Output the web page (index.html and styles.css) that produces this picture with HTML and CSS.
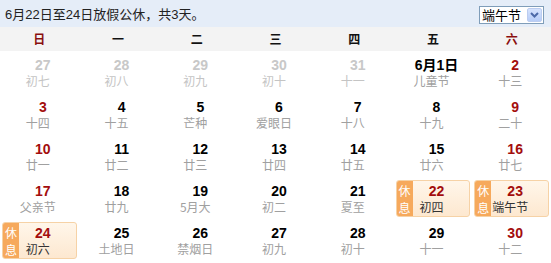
FILE: index.html
```html
<!DOCTYPE html>
<html lang="zh-CN">
<head>
<meta charset="utf-8">
<title>日历</title>
<link rel="stylesheet" href="styles.css">
</head>
<body>
<div class="cal">
  <div class="top">
    <span class="info">6月22日至24日放假公休，共3天。</span>
    <div class="sel">
      <span class="sel-text">端午节</span>
      <span class="sel-btn"><svg width="9" height="6" viewBox="0 0 9 6"><path d="M1 1 L4.5 4.5 L8 1" fill="none" stroke="#4d6aa8" stroke-width="2"/></svg></span>
    </div>
  </div>
  <div class="week">
    <div class="wd red">日</div>
    <div class="wd">一</div>
    <div class="wd">二</div>
    <div class="wd">三</div>
    <div class="wd">四</div>
    <div class="wd">五</div>
    <div class="wd red">六</div>
  </div>
  <div class="days">
    <div class="cell other"><b class="num">27</b><span class="lun">初七</span></div>
    <div class="cell other"><b class="num">28</b><span class="lun">初八</span></div>
    <div class="cell other"><b class="num">29</b><span class="lun">初九</span></div>
    <div class="cell other"><b class="num">30</b><span class="lun">初十</span></div>
    <div class="cell other"><b class="num">31</b><span class="lun">十一</span></div>
    <div class="cell"><b class="num">6月1日</b><span class="lun">儿童节</span></div>
    <div class="cell wk"><b class="num">2</b><span class="lun">十三</span></div>

    <div class="cell wk"><b class="num">3</b><span class="lun">十四</span></div>
    <div class="cell"><b class="num">4</b><span class="lun">十五</span></div>
    <div class="cell"><b class="num">5</b><span class="lun">芒种</span></div>
    <div class="cell"><b class="num">6</b><span class="lun">爱眼日</span></div>
    <div class="cell"><b class="num">7</b><span class="lun">十八</span></div>
    <div class="cell"><b class="num">8</b><span class="lun">十九</span></div>
    <div class="cell wk"><b class="num">9</b><span class="lun">二十</span></div>

    <div class="cell wk"><b class="num">10</b><span class="lun">廿一</span></div>
    <div class="cell"><b class="num">11</b><span class="lun">廿二</span></div>
    <div class="cell"><b class="num">12</b><span class="lun">廿三</span></div>
    <div class="cell"><b class="num">13</b><span class="lun">廿四</span></div>
    <div class="cell"><b class="num">14</b><span class="lun">廿五</span></div>
    <div class="cell"><b class="num">15</b><span class="lun">廿六</span></div>
    <div class="cell wk"><b class="num">16</b><span class="lun">廿七</span></div>

    <div class="cell wk"><b class="num">17</b><span class="lun">父亲节</span></div>
    <div class="cell"><b class="num">18</b><span class="lun">廿九</span></div>
    <div class="cell"><b class="num">19</b><span class="lun">5月大</span></div>
    <div class="cell"><b class="num">20</b><span class="lun">初二</span></div>
    <div class="cell"><b class="num">21</b><span class="lun">夏至</span></div>
    <div class="cell hol"><div class="rest"><span class="tag">休<br>息</span><b class="num">22</b><span class="lun">初四</span></div></div>
    <div class="cell hol"><div class="rest"><span class="tag">休<br>息</span><b class="num">23</b><span class="lun">端午节</span></div></div>

    <div class="cell hol"><div class="rest"><span class="tag">休<br>息</span><b class="num">24</b><span class="lun">初六</span></div></div>
    <div class="cell"><b class="num">25</b><span class="lun">土地日</span></div>
    <div class="cell"><b class="num">26</b><span class="lun">禁烟日</span></div>
    <div class="cell"><b class="num">27</b><span class="lun">初九</span></div>
    <div class="cell"><b class="num">28</b><span class="lun">初十</span></div>
    <div class="cell"><b class="num">29</b><span class="lun">十一</span></div>
    <div class="cell wk"><b class="num">30</b><span class="lun">十二</span></div>
  </div>
</div>
</body>
</html>
```

FILE: styles.css
```css
html, body {
  margin: 0;
  padding: 0;
  background: #fff;
}

.cal {
  width: 551px;
  font-family: "Noto Sans CJK SC", "Liberation Sans", sans-serif;
  font-size: 12px;
  color: #333;
}

.top {
  height: 27px;
  background: #e5edf8;
  display: flex;
  align-items: center;
  justify-content: space-between;
  padding: 0 7px 0 5px;
  box-sizing: border-box;
}

.info {
  font-size: 13px;
  color: #222;
  font-family: "Liberation Sans", "Noto Sans CJK SC", sans-serif;
}

.sel {
  width: 65px;
  height: 18px;
  box-sizing: border-box;
  border: 1px solid #7f9db9;
  background: #fff;
  display: flex;
  align-items: center;
  justify-content: space-between;
  margin-top: 3px;
}

.sel-text {
  padding-left: 2px;
  font-size: 13px;
  color: #000;
  line-height: 16px;
}

.sel-btn {
  width: 15px;
  height: 14px;
  margin-right: 1px;
  border-radius: 2px;
  background: linear-gradient(#d6e3fd, #b7cdf7);
  border: 1px solid #bccdf0;
  box-sizing: border-box;
  display: flex;
  align-items: center;
  justify-content: center;
}

.week {
  height: 24px;
  background: #f3f3f3;
  display: grid;
  grid-template-columns: repeat(7, 1fr);
  align-items: center;
}

.wd {
  text-align: center;
  font-weight: bold;
  font-size: 12px;
  color: #111;
  line-height: 24px;
}

.wd.red {
  color: #8a0f0f;
}

.days {
  display: grid;
  grid-template-columns: repeat(7, 1fr);
  grid-auto-rows: 42px;
}

.cell {
  display: flex;
  flex-direction: column;
  align-items: center;
  padding-top: 6px;
  box-sizing: border-box;
}

.num {
  font-family: "Liberation Sans", "Noto Sans CJK SC", sans-serif;
  font-size: 14px;
  font-weight: bold;
  line-height: 16px;
  color: #000;
  padding-left: 7px;
}

.lun {
  font-size: 12px;
  line-height: 13px;
  margin-top: 1px;
  color: #a0a0a0;
  padding-right: 3px;
}

.cell.wk .num {
  color: #a30d0d;
}

.cell.other .num {
  color: #c8c8c8;
}

.cell.other .lun {
  color: #c4c4c4;
}

.cell.hol {
  padding: 3px 2px 0 2px;
  align-items: stretch;
}

.rest {
  position: relative;
  height: 37px;
  box-sizing: border-box;
  border: 1px solid #f6d2a6;
  border-radius: 3px;
  background: linear-gradient(#fff6ea, #fde8d0);
  display: flex;
  flex-direction: column;
  align-items: center;
  padding-top: 2px;
  overflow: hidden;
}

.rest .num {
  color: #a30d0d;
}

.rest .lun {
  color: #333;
}

.tag {
  position: absolute;
  left: 0;
  top: 0;
  bottom: 0;
  width: 16px;
  background: #f6a95c;
  color: #fff;
  font-size: 12px;
  line-height: 17px;
  text-align: center;
  padding-top: 1px;
  box-sizing: border-box;
}
```
